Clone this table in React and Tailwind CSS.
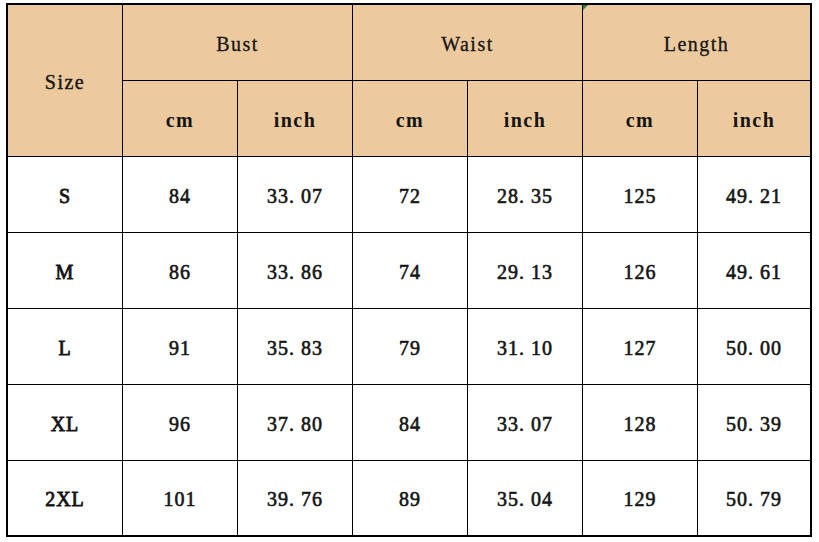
const rows = [
  ['S', '84', '33.07', '72', '28.35', '125', '49.21'],
  ['M', '86', '33.86', '74', '29.13', '126', '49.61'],
  ['L', '91', '35.83', '79', '31.10', '127', '50.00'],
  ['XL', '96', '37.80', '84', '33.07', '128', '50.39'],
  ['2XL', '101', '39.76', '89', '35.04', '129', '50.79'],
]

const head = 'flex items-center justify-center bg-[#ecca9e] border-black tracking-[1.5px] pt-[3px]'

export default function App() {
  return (
    <div className="w-[819px] h-[542px] bg-white pt-[3px] pl-[6px]">
      <div
        className="w-[806px] border-2 border-black text-[20px] text-[#151515]"
        style={{ fontFamily: '"Liberation Serif", "DejaVu Serif", serif' }}
      >
        <div className="grid grid-cols-[115px_115px_115px_115px_115px_115px_112px] grid-rows-[76px_76px_76px_76px_76px_76px_74px]">
          <div className={`${head} row-span-2 border-r border-b [-webkit-text-stroke:0.4px_#151515]`}>Size</div>
          <div className={`${head} col-span-2 border-r border-b [-webkit-text-stroke:0.3px_#151515]`}>Bust</div>
          <div className={`${head} col-span-2 border-r border-b [-webkit-text-stroke:0.3px_#151515]`}>Waist</div>
          <div className={`${head} col-span-2 border-b relative [-webkit-text-stroke:0.3px_#151515]`}>
            <svg className="absolute left-0 top-0" width="5" height="5" viewBox="0 0 5 5">
              <polygon points="0,0 5,0 0,5" fill="#2e7d32" />
            </svg>
            Length
          </div>
          {['cm', 'inch', 'cm', 'inch', 'cm', 'inch'].map((u, i) => (
            <div key={i} className={`${head} font-bold border-b ${i < 5 ? 'border-r' : ''}`}>
              {u}
            </div>
          ))}
          {rows.map((r, ri) =>
            r.map((c, ci) => (
              <div
                key={`${ri}-${ci}`}
                className={`flex items-center justify-center pt-[2px] tracking-[1px] border-black ${ci === 0 ? '[-webkit-text-stroke:0.8px_#151515]' : '[-webkit-text-stroke:0.6px_#151515]'} ${ci < 6 ? 'border-r' : ''} ${ri < 4 ? 'border-b' : ''}`}
              >
                {c.replace('.', '. ')}
              </div>
            ))
          )}
        </div>
      </div>
    </div>
  )
}
